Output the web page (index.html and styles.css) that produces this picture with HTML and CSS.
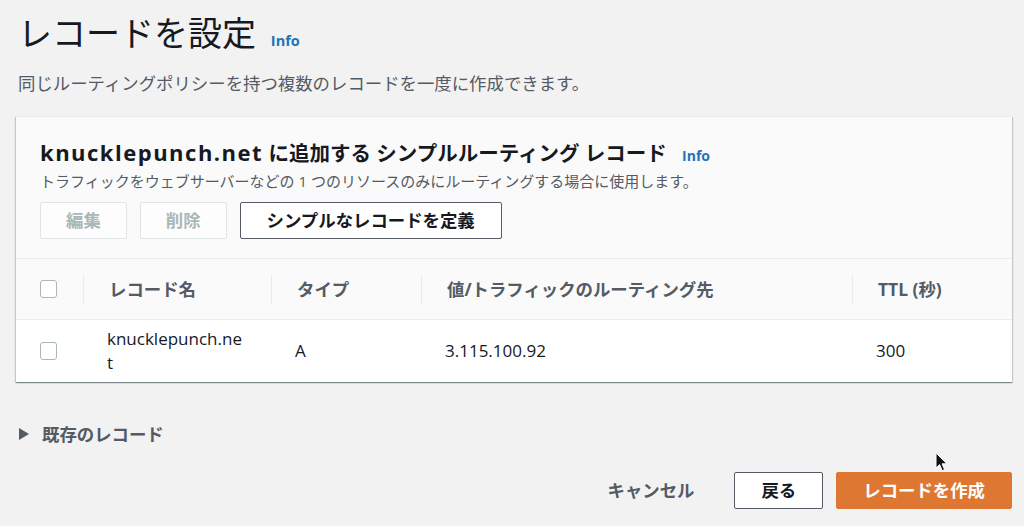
FILE: index.html
```html
<!DOCTYPE html>
<html lang="ja">
<head>
<meta charset="utf-8">
<title>レコードを設定</title>
<link rel="stylesheet" href="styles.css">
</head>
<body>
<div class="page">
  <h1 class="title">レコードを設定 <a class="info info-lg">Info</a></h1>
  <p class="subtitle">同じルーティングポリシーを持つ複数のレコードを一度に作成できます。</p>

  <section class="card">
    <div class="card-header">
      <h2 class="card-title"><span class="latin">knucklepunch.net</span> に追加する シンプルルーティング レコード <a class="info">Info</a></h2>
      <p class="card-desc">トラフィックをウェブサーバーなどの 1 つのリソースのみにルーティングする場合に使用します。</p>
      <div class="actions">
        <button class="btn btn-disabled">編集</button>
        <button class="btn btn-disabled">削除</button>
        <button class="btn btn-normal btn-define">シンプルなレコードを定義</button>
      </div>
    </div>
    <div class="table">
      <div class="row head">
        <div class="cell check"><span class="box"></span></div>
        <div class="cell hcell">レコード名</div>
        <div class="cell hcell">タイプ</div>
        <div class="cell hcell">値/トラフィックのルーティング先</div>
        <div class="cell hcell">TTL (秒)</div>
      </div>
      <div class="row body">
        <div class="cell check"><span class="box"></span></div>
        <div class="cell dcell name">knucklepunch.net</div>
        <div class="cell dcell">A</div>
        <div class="cell dcell">3.115.100.92</div>
        <div class="cell dcell">300</div>
      </div>
    </div>
  </section>

  <div class="expander"><span class="caret"></span>既存のレコード</div>

  <div class="footer">
    <button class="btn btn-link">キャンセル</button>
    <button class="btn btn-normal btn-back">戻る</button>
    <button class="btn btn-primary">レコードを作成</button>
  </div>

  <svg class="cursor" width="14" height="21" viewBox="0 0 14 21" aria-hidden="true">
    <path d="M1 1 L1 16 L4.6 12.6 L7.2 18.6 L9.6 17.6 L7.1 11.8 L12 11.8 Z" fill="#111" stroke="#fff" stroke-width="1"/>
  </svg>
</div>
</body>
</html>
```

FILE: styles.css
```css
* { box-sizing: border-box; }
html, body { margin: 0; padding: 0; }
body {
  background: #f2f2f2;
  font-family: "Open Sans", "Noto Sans CJK JP", sans-serif;
  color: #16191f;
  width: 1024px;
  height: 526px;
  overflow: hidden;
}
.page {
  position: relative;
  padding: 13px 12px 0 16px;
}
.title {
  margin: 0;
  padding-left: 2px;
  font-size: 34px;
  line-height: 40px;
  font-weight: 400;
  color: #16191f;
}
.info {
  color: #1f73b7;
  font-weight: 700;
  font-size: 14px;
  line-height: 1;
  text-decoration: none;
}
.info-lg { margin-left: 6px; font-size: 14.5px; }
.subtitle {
  margin: 18px 0 0 2px;
  font-size: 17.4px;
  line-height: 24px;
  color: #545b64;
}
.card {
  margin-top: 21px;
  background: #fafafa;
  box-shadow: 0 1px 1px 0 rgba(0,28,36,.3), 1px 1px 1px 0 rgba(0,28,36,.15), -1px 1px 1px 0 rgba(0,28,36,.15);
  border-top: 1px solid #eaeded;
}
.card-header {
  padding: 22px 24px 19px 24px;
  border-bottom: 1px solid #eaeded;
}
.card-title {
  margin: 0;
  font-size: 20.5px;
  line-height: 28px;
  font-weight: 700;
}
.card-title .latin {
  font-size: 22px;
  line-height: 1;
  letter-spacing: 1.5px;
}
.card-title .info { margin-left: 10px; }
.card-desc {
  margin: 4px 0 0 0;
  font-size: 15px;
  line-height: 20px;
  color: #545b64;
}
.actions {
  margin-top: 11px;
  display: flex;
  gap: 13px;
}
.btn {
  font-family: inherit;
  font-weight: 700;
  font-size: 17.4px;
  height: 37px;
  padding: 0 26px;
  border-radius: 2px;
  line-height: 35px;
  cursor: pointer;
}
.btn-disabled {
  background: #fdfdfd;
  border: 1px solid #e1e4e4;
  color: #aab7b8;
  padding: 0 25px;
}
.btn-normal {
  background: #fff;
  border: 1px solid #545b64;
  color: #16191f;
}
.btn-define { padding: 0 26px; }
.btn-link {
  background: transparent;
  border: 1px solid transparent;
  color: #545b64;
}
.btn-primary {
  background: #dd7731;
  border: 1px solid #dd7731;
  color: #fff;
}
.row {
  display: grid;
  grid-template-columns: 67px 188px 150px 431px 1fr;
  align-items: center;
}
.row.head {
  height: 61px;
  background: #fafafa;
  border-bottom: 1px solid #eaeded;
}
.row.body {
  height: 62px;
  background: #fff;
}
.cell.check {
  padding-left: 24px;
  display: flex;
  align-items: center;
}
.box {
  display: block;
  width: 17px;
  height: 18px;
  border: 1px solid #aab7b8;
  border-radius: 3px;
  background: #fff;
}
.hcell {
  height: 29px;
  line-height: 29px;
  border-left: 1px solid #eaeded;
  padding-left: 25px;
  font-size: 17.4px;
  font-weight: 700;
  color: #545b64;
}
.dcell {
  padding-left: 24px;
  font-size: 17px;
  line-height: 24px;
  color: #16191f;
}
.dcell.name {
  padding-right: 26px;
  word-break: break-all;
}
.expander {
  margin-top: 40px;
  padding-left: 3px;
  display: flex;
  align-items: center;
  font-size: 17.4px;
  line-height: 24px;
  font-weight: 700;
  color: #545b64;
}
.caret {
  width: 0;
  height: 0;
  border-top: 6px solid transparent;
  border-bottom: 6px solid transparent;
  border-left: 10px solid #545b64;
  margin-right: 13px;
}
.footer {
  margin-top: 26px;
  display: flex;
  justify-content: flex-end;
  gap: 13px;
}
.cursor {
  position: absolute;
  left: 935px;
  top: 452px;
}
```
